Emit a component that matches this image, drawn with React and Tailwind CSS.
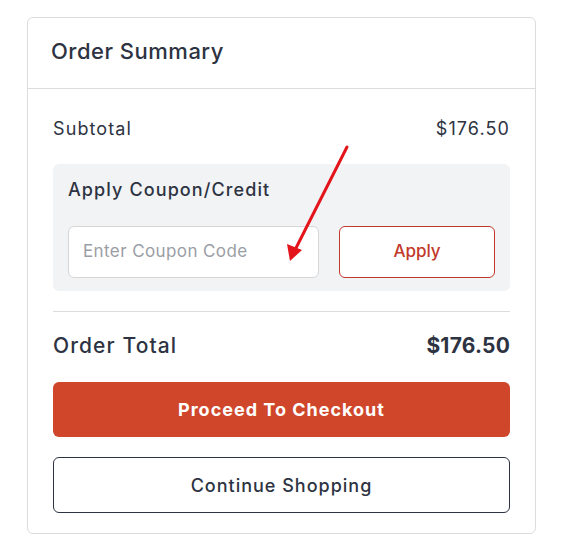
export default function App() {
  return (
    <div className="relative w-[573px] h-[541px] bg-white" style={{ fontFamily: "Inter, 'Liberation Sans', sans-serif" }}>
      <div className="absolute left-[27px] top-[17px] w-[509px] h-[517px] rounded-[6px] border border-[#dcdcdc] bg-white flex flex-col">
        <div className="h-[71px] pb-[3px] border-b border-[#dcdcdc] flex items-center pl-[23px]">
          <h2 className="text-[22px] text-[#2d3342] font-medium tracking-[0.5px]">Order Summary</h2>
        </div>
        <div className="px-[25px] flex flex-col">
          <div className="h-[75px] pt-[4px] flex items-center justify-between text-[18px] tracking-[1.1px] text-[#2d3342]">
            <span>Subtotal</span>
            <span>$176.50</span>
          </div>
          <div className="h-[127px] rounded-[6px] bg-[#f2f3f5] px-[15px] pt-[14px]">
            <div className="text-[18px] font-medium tracking-[1.1px] text-[#2d3342] h-[24px] leading-[24px]">Apply Coupon/Credit</div>
            <div className="mt-[24px] flex gap-[20px]">
              <div className="w-[251px] h-[52px] rounded-[6px] border border-[#d6d6d6] bg-white flex items-center pl-[14px] text-[17px] tracking-[0.4px] text-[#9a9ea5]">
                Enter Coupon Code
              </div>
              <div className="w-[156px] h-[52px] rounded-[6px] border border-[#c2382a] bg-white flex items-center justify-center text-[17px] font-medium text-[#c2382a]">
                Apply
              </div>
            </div>
          </div>
          <div className="mt-[20px] border-t border-[#dcdcdc]"></div>
          <div className="h-[70px] pb-[2px] flex items-center justify-between text-[21px] text-[#2d3342]">
            <span className="font-medium tracking-[1.1px]">Order Total</span>
            <span className="font-bold tracking-[0.2px]">$176.50</span>
          </div>
          <div className="h-[55px] rounded-[6px] bg-[#d0462b] flex items-center justify-center text-[18px] font-bold tracking-[1px] text-white">
            Proceed To Checkout
          </div>
          <div className="mt-[20px] h-[56px] rounded-[6px] border border-[#2d3342] flex items-center justify-center text-[18px] font-medium tracking-[1px] text-[#2d3342]">
            Continue Shopping
          </div>
        </div>
      </div>
      <svg className="absolute left-0 top-0" width="573" height="541">
        <line x1="347" y1="147" x2="296" y2="248" stroke="#e3141a" strokeWidth="3" strokeLinecap="round" />
        <polygon points="290,261 287,244 302,250" fill="#e3141a" />
      </svg>
    </div>
  );
}
